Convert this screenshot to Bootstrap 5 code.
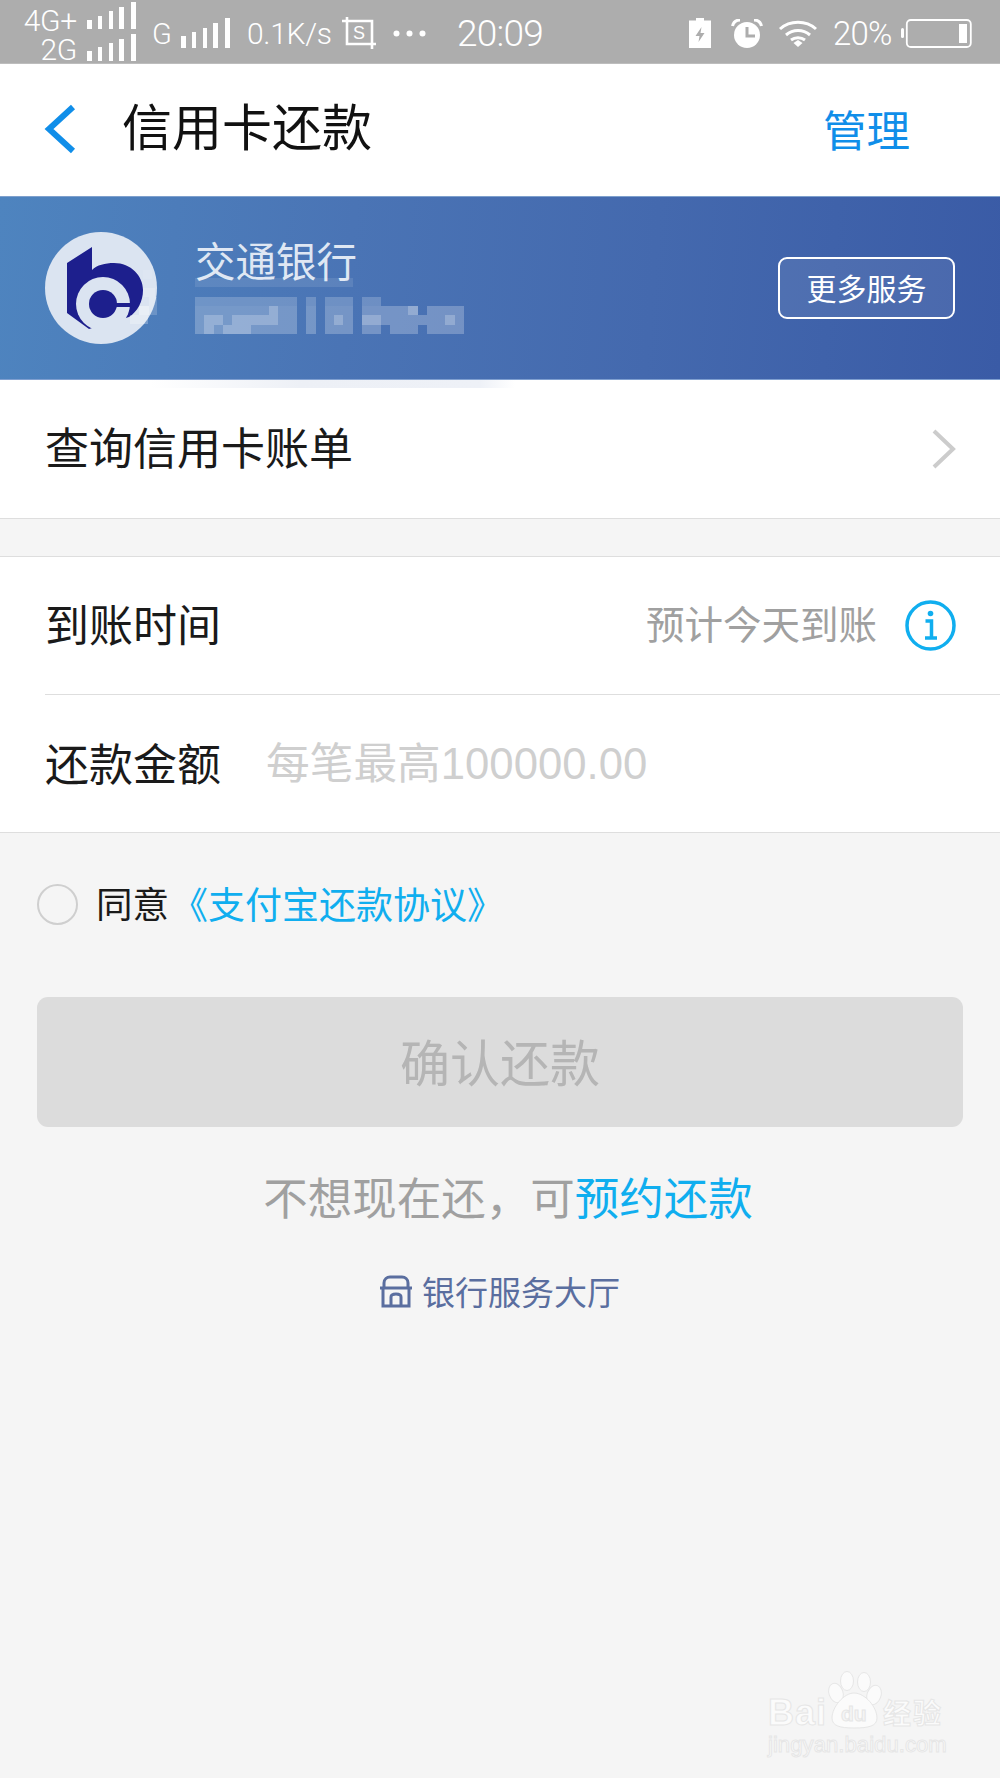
<!DOCTYPE html>
<html lang="zh-CN">
<head>
<meta charset="utf-8">
<title>信用卡还款</title>
<link href="https://cdn.jsdelivr.net/npm/bootstrap@5.3.0/dist/css/bootstrap.min.css" rel="stylesheet">
<style>
html,body{margin:0;background:#f5f5f5;}
.pg{position:relative;width:1000px;height:1778px;overflow:hidden;background:#f5f5f5;font-family:"Noto Sans CJK SC","Liberation Sans",sans-serif;color:#1a1a1a;}
.sbar{height:64px;background:#adadad;border-bottom:1px solid #bdbdbd;color:#fff;font-family:Roboto,"Liberation Sans",sans-serif;font-weight:300;padding-left:20px;padding-right:28px;}
.sbar svg{display:block;flex:none;}
.net{width:57px;text-align:right;font-size:30px;line-height:29px;margin-top:6px;letter-spacing:-.3px;white-space:nowrap;}
.net div{height:29px;line-height:29px;}
.sig-col{margin-left:10px;margin-right:16px;}
.g1{font-size:29px;line-height:1;width:18px;margin-right:11px;margin-top:6px;}
.spd{font-size:30px;line-height:1;margin-left:17px;width:85px;margin-right:10px;letter-spacing:-.3px;margin-top:4px;white-space:nowrap;}
.clk{font-size:37px;line-height:1;margin-left:31px;letter-spacing:-.8px;margin-top:3px;}
.pct{font-size:33px;line-height:1;margin:3px 9px 0 15px;width:59px;letter-spacing:-.8px;white-space:nowrap;}
.hdr{height:132px;background:#fff;padding:0 90px 0 43px;}
.hdr-t{font-size:50px;line-height:1;margin-left:45px;color:#111;margin-top:-12px;}
.hdr-m{font-size:43.5px;line-height:1;color:#108ee9;margin-top:-3px;}
.bnk{height:184px;padding:0 45px;background:linear-gradient(95deg,#4e84bf 0%,#4a74b5 35%,#4469ae 65%,#3a5ba6 100%);border-top:1px solid #7ea0cd;border-bottom:1px solid #7f9fd0;}
.bnk-info{margin-left:38px;color:#e9eff8;}
.bnk-n{font-size:40.5px;line-height:37px;white-space:nowrap;color:#dfe7f3;margin-top:-2px;}
.btn-svc{width:177px;height:62px;border:2.5px solid #fff;border-radius:9px;background:rgba(255,255,255,.08);color:#fff;font-size:30px;line-height:1;padding:0 0 3px;font-family:inherit;}
.btn-svc:hover{color:#fff;}
.rw{background:#fff;padding:0 45px;font-size:44px;line-height:1;color:#1a1a1a;}
.rw-q{height:139px;border-bottom:1px solid #dedede;background-image:linear-gradient(90deg,#fff 150px,#edf0f6 300px,#eef1f7 480px,#fff 515px);background-repeat:no-repeat;background-size:100% 8px;padding-right:44px;}
.rw-q>div{margin-top:-6px;}
.grp{margin-top:37px;background:#fff;border-top:1px solid #dedede;border-bottom:1px solid #dedede;}
.rw-a{height:138px;padding:0 44px 0 0;margin-left:45px;background:#fff;border-bottom:1px solid #dedede;}
.rw-b{height:137px;padding:0;margin-left:45px;background:#fff;}
.lbl{font-size:44px;}
.rw-a .lbl,.rw-a .hint{margin-top:-6px;}
.rw-b .lbl{margin-top:-4px;}
.hint{font-size:38.5px;color:#a0a0a0;margin-right:28px;line-height:1;}
.ph{font-size:43.7px;color:#cfcfcf;margin-left:45px;line-height:1;font-family:"Liberation Sans","Noto Sans CJK SC",sans-serif;}
.agr{margin-top:50px;padding-left:37px;height:42px;font-size:36.5px;line-height:1;}
.agr>span:not(.rd),.agr>a{margin-top:-2px;}
.rd{width:41px;height:41px;border-radius:50%;border:2px solid #cfcfcf;flex:none;margin-right:18px;}
.lnk{color:#10aeef;text-decoration:none;}
.agr>a{font-size:37px;margin-left:2px;}
.cf{display:block;margin:72px 37px 0;width:926px;height:130px;background:#dcdcdc;border:0;border-radius:11px;color:#b5b5b5;font-size:50px;line-height:1;padding:0 0 4px;font-family:inherit;}
.cf:disabled{background:#dcdcdc;color:#b5b5b5;opacity:1;}
.alt{margin-top:39px;padding-left:16px;text-align:center;font-size:44.5px;line-height:60px;color:#a0a0a0;}
.cm{font-family:"Noto Sans CJK TC",sans-serif;}
.hall{margin-top:49px;font-size:33px;line-height:1;color:#5a6e9f;}
.hall svg{margin-right:10px;}
.wm{position:absolute;left:760px;top:1665px;}
</style>
</head>
<body>
<div class="pg">

  <div class="sbar d-flex align-items-center">
    <div class="net"><div>4G+</div><div>2G</div></div>
    <svg class="sig-col" width="49" height="59" viewBox="0 0 49 59" fill="#fff"><rect x="0" y="18" width="5" height="9"/><rect x="11" y="14" width="4" height="13"/><rect x="22" y="9" width="4" height="18"/><rect x="32" y="5" width="5" height="22"/><rect x="44" y="0" width="5" height="27"/><rect x="0" y="49" width="5" height="10"/><rect x="11" y="45" width="4" height="14"/><rect x="22" y="41" width="4" height="18"/><rect x="32" y="37" width="5" height="22"/><rect x="44" y="32" width="5" height="27"/></svg>
    <div class="g1">G</div>
    <svg width="49" height="30" viewBox="0 0 49 30" fill="#fff" style="margin-top:3px"><rect x="0" y="18" width="5" height="12"/><rect x="11" y="14" width="4" height="16"/><rect x="22" y="10" width="4" height="20"/><rect x="32" y="5" width="5" height="25"/><rect x="44" y="0" width="5" height="30"/></svg>
    <div class="spd">0.1K/s</div>
    <svg width="34" height="32" viewBox="0 0 34 32" style="margin-top:3px"><path d="M0 4H30V28M5 0V27H34M30 27V32" fill="none" stroke="#fff" stroke-width="2.6"/><text x="17" y="22" font-size="18" fill="#fff" text-anchor="middle" font-family="Liberation Sans,sans-serif">S</text></svg>
    <svg width="33" height="7" viewBox="0 0 33 7" fill="#fff" style="margin-left:17px;margin-top:3px"><circle cx="3.500" cy="3.500" r="3"/><circle cx="16.500" cy="3.500" r="3"/><circle cx="29.500" cy="3.500" r="3"/></svg>
    <div class="clk">20:09</div>
    <div class="flex-grow-1"></div>
    <svg width="22" height="30" viewBox="0 0 22 30" style="margin-top:3px"><path d="M7 0H15V2.500H22V30H0V2.500H7Z" fill="#fff"/><path d="M12.500 9L6.500 18H10.500L9.500 24L15.500 15H11.500Z" fill="#adadad"/></svg>
    <svg width="32" height="29" viewBox="0 0 32 29" style="margin-left:20px;margin-top:3px"><circle cx="16" cy="16" r="13" fill="#fff"/><path d="M16 8V17H24" fill="none" stroke="#adadad" stroke-width="3"/><path d="M1.500 7C2.500 3 5.500 1 9 1M30.500 7C29.500 3 26.500 1 23 1" fill="none" stroke="#fff" stroke-width="3"/></svg>
    <svg width="40" height="27" viewBox="0 0 40 27" style="margin-left:15px;margin-top:3px" fill="none" stroke="#fff" stroke-width="3"><path d="M2 9C12 0 28 0 38 9"/><path d="M8 15C15 9 25 9 32 15"/><path d="M13 20C17 17 23 17 27 20"/><path d="M15.500 23L20 20L24.500 23L20 27Z" fill="#fff" stroke="none"/></svg>
    <div class="pct">20%</div>
    <svg width="71" height="29" viewBox="0 0 71 29" style="margin-top:3px"><rect x="0" y="9" width="3" height="10" rx="1.500" fill="#fff"/><rect x="5.800" y="1" width="64" height="27" rx="4" fill="none" stroke="#fff" stroke-width="1.800"/><rect x="58" y="5" width="8" height="19" fill="#fff"/></svg>
  </div>

  <div class="hdr d-flex align-items-center">
    <svg width="34" height="50" viewBox="0 0 34 50" style="margin-top:-2px"><path d="M30 3L6 25L30 47" fill="none" stroke="#108ee9" stroke-width="6"/></svg>
    <div class="hdr-t">信用卡还款</div>
    <div class="hdr-m ms-auto">管理</div>
  </div>

  <div class="bnk d-flex align-items-center">
    <svg width="112" height="112" viewBox="0 0 112 112" class="flex-none">
      <circle cx="56" cy="56" r="56" fill="#dbe4f1"/>
      <path d="M22 31L47 15V38C52 33 60 31 69 31C86 31 98 44 98 58C98 70 92 80 84 85L44 97L22 81Z" fill="#1d1f8d"/>
      <circle cx="58" cy="72" r="27" fill="#dbe4f1"/>
      <circle cx="58" cy="72" r="14" fill="#1d1f8d"/>
      <rect x="58" y="71" width="27" height="4" fill="#1d1f8d"/>
      <g fill="#fff"><rect x="98" y="38" width="9" height="9" opacity=".1"/><rect x="98" y="56" width="12" height="9" opacity=".2"/><rect x="94" y="74" width="10" height="9" opacity=".4"/><rect x="85" y="83" width="18" height="9" opacity=".25"/><rect x="104" y="65" width="8" height="18" opacity=".18"/></g>
    </svg>
    <div class="bnk-info">
      <div class="bnk-n">交通银行</div>
      <svg width="269" height="56" viewBox="0 0 29 6" shape-rendering="crispEdges" class="d-block" fill="#fff">
        <g opacity=".1"><rect x="0" y="0" width="17" height="1"/></g>
        <g opacity=".2"><rect x="0" y="2" width="11" height="1"/><rect x="12" y="2" width="1" height="1"/><rect x="14" y="2" width="3" height="1"/><rect x="18" y="2" width="2" height="1"/></g>
        <g opacity=".24"><rect x="0" y="3" width="11" height="3"/><rect x="12" y="3" width="1" height="3"/><rect x="14" y="3" width="3" height="3"/><rect x="18" y="3" width="6" height="1"/><rect x="25" y="3" width="4" height="1"/><rect x="18" y="4" width="8" height="1"/><rect x="25" y="4" width="4" height="1"/><rect x="18" y="5" width="2" height="1"/><rect x="21" y="5" width="3" height="1"/><rect x="25" y="5" width="4" height="1"/></g>
        <g opacity=".22"><rect x="1" y="4" width="2" height="1"/><rect x="4" y="4" width="4" height="1"/><rect x="1" y="5" width="1" height="1"/><rect x="3" y="5" width="3" height="1"/><rect x="8" y="3" width="1" height="2"/><rect x="15" y="4" width="1" height="1"/><rect x="18" y="4" width="2" height="1"/><rect x="23" y="3" width="1" height="1"/><rect x="27" y="4" width="1" height="1"/></g>
      </svg>
    </div>
    <button type="button" class="btn btn-svc ms-auto">更多服务</button>
  </div>

  <div class="rw rw-q d-flex align-items-center justify-content-between">
    <div>查询信用卡账单</div>
    <svg width="24" height="40" viewBox="0 0 24 40"><path d="M2 2L21 20L2 38" fill="none" stroke="#cccccc" stroke-width="4"/></svg>
  </div>

  <div class="grp">
    <div class="rw rw-a d-flex align-items-center">
      <div class="lbl">到账时间</div>
      <div class="hint ms-auto">预计今天到账</div>
      <svg width="51" height="51" viewBox="0 0 51 51"><circle cx="25.500" cy="25.500" r="23.500" fill="none" stroke="#10aeef" stroke-width="3.500"/><circle cx="25.500" cy="13.500" r="2.800" fill="#10aeef"/><path d="M20.500 21H26.500V37M20 38H32" fill="none" stroke="#10aeef" stroke-width="3.500"/></svg>
    </div>
    <div class="rw rw-b d-flex align-items-center">
      <div class="lbl">还款金额</div>
      <div class="ph">每笔最高100000.00</div>
    </div>
  </div>

  <div class="agr d-flex align-items-center">
    <span class="rd"></span>
    <span>同意</span>
    <a class="lnk" href="#">《支付宝还款协议》</a>
  </div>

  <button type="button" class="btn cf" disabled>确认还款</button>

  <div class="alt">不想现在还<span class="cm">，</span>可<a class="lnk" href="#">预约还款</a></div>

  <div class="hall d-flex align-items-center justify-content-center">
    <svg width="32" height="33" viewBox="0 0 32 33" fill="none" stroke="#5a6e9f" stroke-width="3"><path d="M4 12V8C4 4 7 2 10 2H22C25 2 28 4 28 8V12"/><path d="M0 13H32"/><path d="M3 13V31H29V13"/><path d="M11 31V22C11 18 21 18 21 22V31"/></svg>
    <span>银行服务大厅</span>
  </div>

  <svg class="wm" width="200" height="100" viewBox="0 0 200 100" font-family="Liberation Sans,sans-serif" fill="#fbfbfb" stroke="#e6e6e6" stroke-width="1">
    <ellipse cx="76" cy="28" rx="7" ry="10" transform="rotate(-20 76 28)"/>
    <ellipse cx="87" cy="16" rx="6.500" ry="9.500"/>
    <ellipse cx="104" cy="17" rx="6.500" ry="9.500"/>
    <ellipse cx="114" cy="30" rx="7" ry="10" transform="rotate(20 114 30)"/>
    <path d="M72 53C72 42 84 28 94 28C105 28 117 42 117 53C117 61 109 63 94 63C80 63 72 61 72 53Z"/>
    <text x="8" y="60" font-size="36" font-weight="700" letter-spacing="1">Bai</text>
    <text x="81" y="56" font-size="21" font-weight="700" fill="#f5f5f5">du</text>
    <text x="123" y="59" font-size="28" font-weight="700" font-family="Noto Sans CJK SC,sans-serif" letter-spacing="2">经验</text>
    <text x="8" y="87" font-size="22.200">jingyan.baidu.com</text>
  </svg>
</div>
<script src="https://cdn.jsdelivr.net/npm/bootstrap@5.3.0/dist/js/bootstrap.bundle.min.js"></script>
</body>
</html>
